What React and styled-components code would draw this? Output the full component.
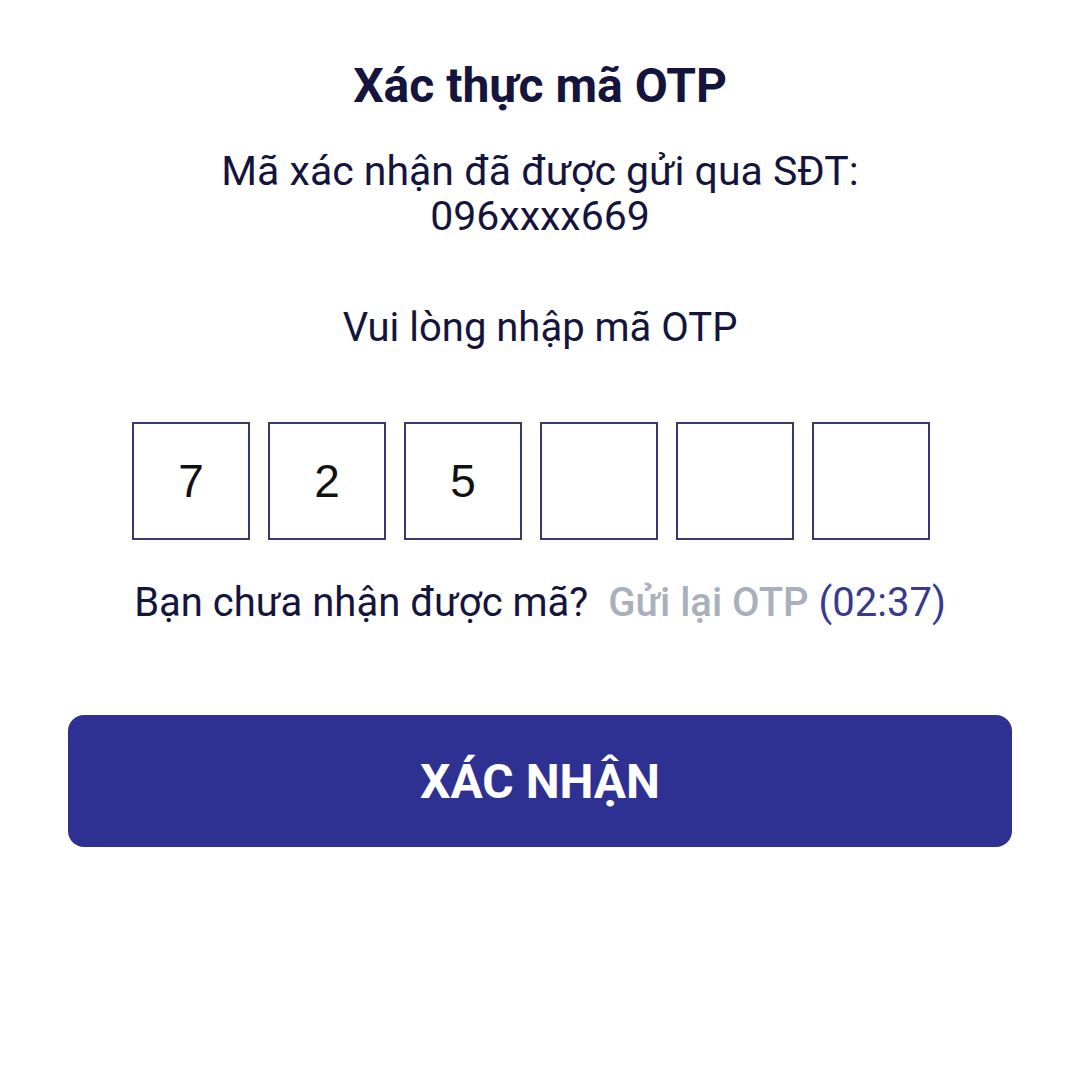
import styled, { createGlobalStyle } from 'styled-components';

const GlobalStyle = createGlobalStyle`
  html, body {
    margin: 0;
    padding: 0;
    background: #ffffff;
  }
  body {
    font-family: Roboto, "Noto Sans", sans-serif;
  }
`;

const Page = styled.div`
  width: 1077px;
  min-height: 1085px;
  box-sizing: border-box;
  padding: 60px 65px 0 68px;
  display: flex;
  flex-direction: column;
  align-items: center;
  color: #14143c;
`;

const Title = styled.h1`
  margin: 0;
  font-size: 48px;
  font-weight: 700;
  line-height: 52px;
`;

const Text = styled.p`
  margin: ${(p) => p.$top || 0}px 0 0;
  font-size: ${(p) => p.$size || 40}px;
  line-height: 45px;
  text-align: center;
  white-space: nowrap;
`;

const Boxes = styled.div`
  margin: 72px 18px 0 0;
  display: flex;
  gap: 18px;
`;

const Box = styled.div`
  width: 118px;
  height: 118px;
  box-sizing: border-box;
  border: 2px solid #393970;
  display: flex;
  align-items: center;
  justify-content: center;
  font-family: "Liberation Sans", Arial, sans-serif;
  font-size: 46px;
  color: #111111;
`;

const ResendLink = styled.span`
  margin-left: 20px;
  color: #a9b0bc;
  font-weight: 500;
`;

const Timer = styled.span`
  margin-left: 10px;
  color: #3a3a8c;
`;

const Confirm = styled.button`
  margin-top: 90px;
  width: 944px;
  height: 132px;
  border: none;
  border-radius: 16px;
  background: #2e3192;
  color: #ffffff;
  font-family: Roboto, "Noto Sans", sans-serif;
  font-size: 48px;
  font-weight: 700;
`;

const code = ['7', '2', '5', '', '', ''];

export default function App() {
  return (
    <>
      <GlobalStyle />
      <Page>
        <Title>Xác thực mã OTP</Title>
        <Text $top={37} $size={41}>
          Mã xác nhận đã được gửi qua SĐT:
          <br />
          096xxxx669
        </Text>
        <Text $top={66}>Vui lòng nhập mã OTP</Text>
        <Boxes>
          {code.map((d, i) => (
            <Box key={i}>{d}</Box>
          ))}
        </Boxes>
        <Text $top={40}>
          Bạn chưa nhận được mã?
          <ResendLink>Gửi lại OTP</ResendLink>
          <Timer>(02:37)</Timer>
        </Text>
        <Confirm>XÁC NHẬN</Confirm>
      </Page>
    </>
  );
}
